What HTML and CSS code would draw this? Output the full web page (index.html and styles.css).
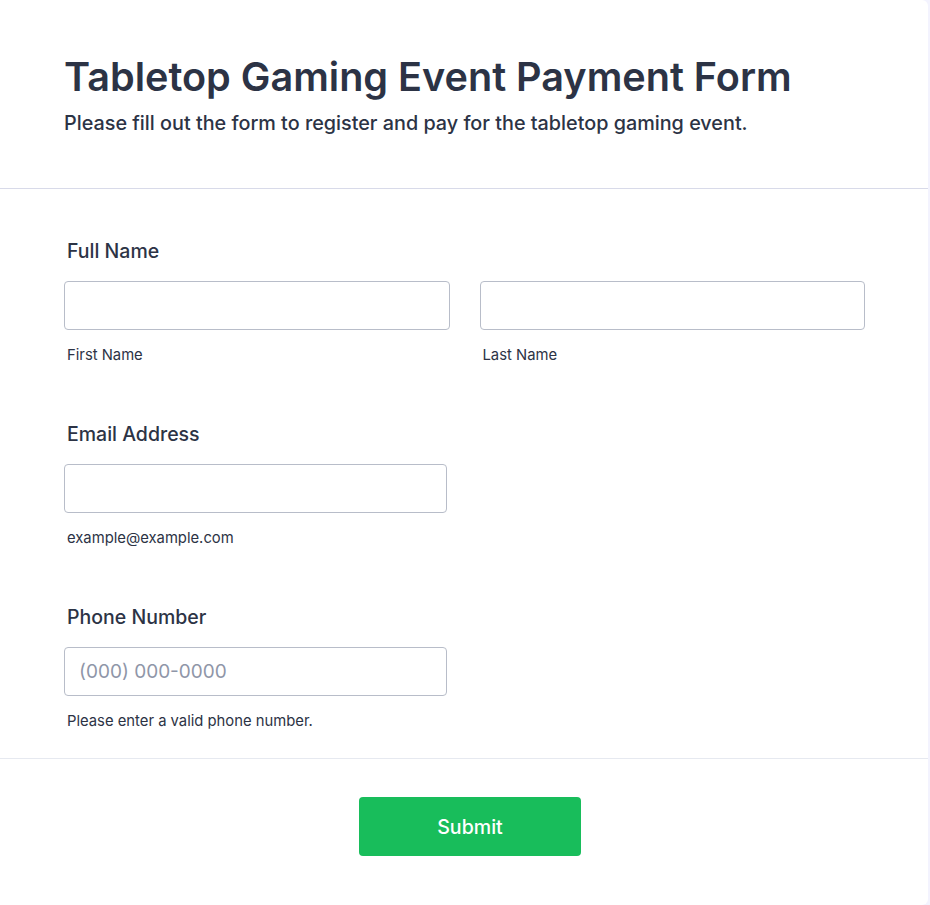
FILE: index.html
```html
<!DOCTYPE html>
<html lang="en">
<head>
    <meta charset="UTF-8">
    <meta name="viewport" content="width=device-width, initial-scale=1.0">
    <title>Tabletop Gaming Event Payment Form</title>
    <link rel="stylesheet" href="styles.css">
</head>
<body>
    <div class="form-card">
        <div class="form-header">
            <h1>Tabletop Gaming Event Payment Form</h1>
            <p>Please fill out the form to register and pay for the tabletop gaming event.</p>
        </div>
        <div class="form-body">
            <div class="field">
                <label class="field-label">Full Name</label>
                <div class="name-row">
                    <div class="sub-field">
                        <input type="text" id="firstName">
                        <span class="sublabel">First Name</span>
                    </div>
                    <div class="sub-field">
                        <input type="text" id="lastName">
                        <span class="sublabel">Last Name</span>
                    </div>
                </div>
            </div>
            <div class="field">
                <label class="field-label">Email Address</label>
                <div class="sub-field half">
                    <input type="email" id="email">
                    <span class="sublabel">example@example.com</span>
                </div>
            </div>
            <div class="field">
                <label class="field-label">Phone Number</label>
                <div class="sub-field half">
                    <input type="tel" id="phone" placeholder="(000) 000-0000">
                    <span class="sublabel">Please enter a valid phone number.</span>
                </div>
            </div>
        </div>
        <div class="form-footer">
            <button id="submitButton">Submit</button>
        </div>
    </div>
</body>
</html>
```

FILE: styles.css
```css
body {
    font-family: Inter, "Noto Sans", sans-serif;
    margin: 0;
    padding: 0;
    background-color: #f3f3fe;
    color: #2c3345;
}
.form-card {
    width: 928px;
    background-color: #fff;
    border-top-right-radius: 6px;
    border-bottom-right-radius: 6px;
    min-height: 905px;
}
.form-header {
    padding: 53px 64px 53px;
    border-bottom: 1px solid #d8dae9;
}
.form-header h1 {
    margin: 0;
    font-size: 39.6px;
    line-height: 48px;
    font-weight: 600;
}
.form-header p {
    margin: 10px 0 0;
    font-size: 19.8px;
    line-height: 24px;
    font-weight: 500;
}
.form-body {
    padding: 50px 64px 28px;
    border-bottom: 1px solid #e6e9f0;
}
.field + .field {
    margin-top: 58px;
}
.field-label {
    display: block;
    margin-left: 3px;
    margin-bottom: 18px;
    font-size: 19.5px;
    line-height: 24px;
    font-weight: 500;
}
.name-row {
    display: flex;
    gap: 30px;
    width: 801px;
}
.sub-field {
    display: flex;
    flex-direction: column;
    flex: 1;
}
.sub-field.half {
    width: 383px;
}
input {
    box-sizing: border-box;
    height: 49px;
    width: 100%;
    padding: 0 14px;
    border: 1px solid #b8bdc9;
    border-radius: 4px;
    font-family: inherit;
    font-size: 19px;
    color: #2c3345;
}
input::placeholder {
    color: #8f96a8;
}
.sublabel {
    margin-top: 16px;
    margin-left: 3px;
    font-size: 14.8px;
    line-height: 18px;
    color: #2c3345;
}
.form-footer {
    display: flex;
    justify-content: center;
    padding-top: 38px;
}
button {
    width: 222px;
    height: 59px;
    background-color: #18bd5b;
    color: #fff;
    border: none;
    border-radius: 4px;
    font-family: inherit;
    font-size: 19.6px;
    font-weight: 500;
    cursor: pointer;
    margin-left: 12px;
}
```
